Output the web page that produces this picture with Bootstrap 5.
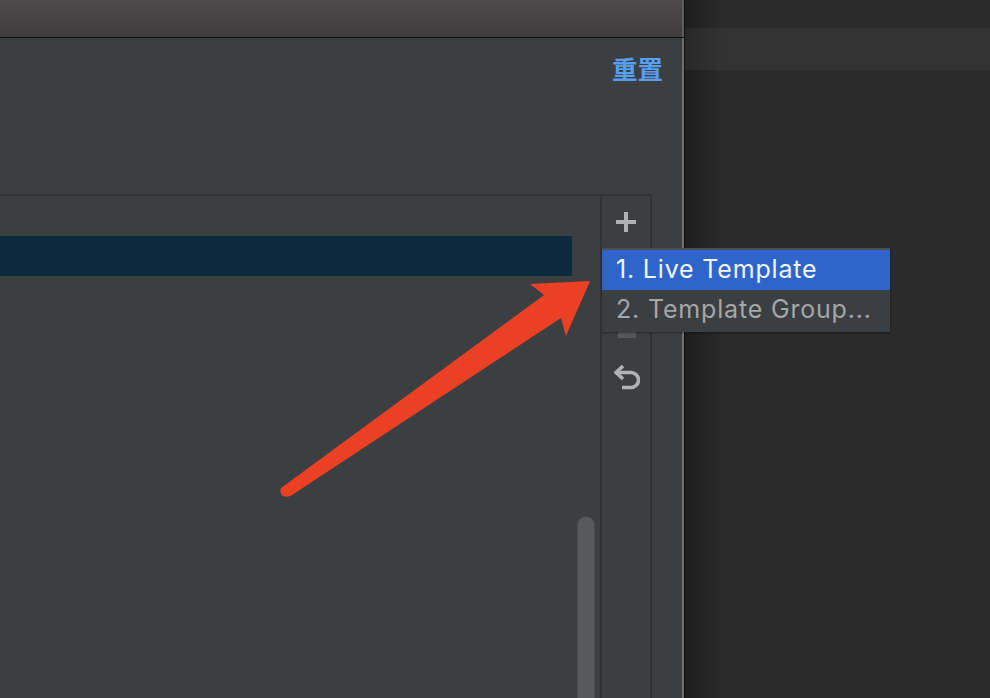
<!doctype html>
<html lang="zh">
<head>
<meta charset="utf-8">
<title>Live Templates</title>
<link href="https://cdn.jsdelivr.net/npm/bootstrap@5.3.0/dist/css/bootstrap.min.css" rel="stylesheet">
<style>
html,body{height:100%;margin:0;overflow:hidden;background:#2b2b2b}
.stage{width:990px;height:698px;position:relative;overflow:hidden}
.dlg{width:685px;height:698px;background:#3c3f41;border-right:1px solid #0f0f0f;box-shadow:inset -2px 0 0 #6f7172;flex:none}
.ttl{height:38px;background:linear-gradient(#4c4a4b,#3f3d3e);border-bottom:1px solid #0e0e0e;flex:none;box-shadow:inset -2px 0 0 #5f5d5e}
.hdr{height:156px;padding:15px 21px 0 0;flex:none;width:684px}
.rst{font:700 25.500px/30px "Noto Sans CJK SC","Liberation Sans",sans-serif;color:#589df6;text-decoration:none}
.pnl{width:652px;border:solid #313334;border-width:2px 2px 0 0;flex:1 1 auto;min-height:0}
.lst{width:572px;padding-top:40px;flex:none}
.sel{height:40px;background:#0d293e}
.trk{width:28px;flex:none;padding:321px 6px 0}
.thm{width:16px;height:200px;background:#58595a;border-radius:8px 8px 0 0;box-shadow:0 0 0 1px #484a4b}
.tools{width:48px;flex:none;border-left:2px solid #313334;padding-top:16px}
.ic-plus{width:20px;height:20px;margin-left:1px}
.ic-minus{width:18px;height:6px;margin-top:100px;margin-left:3px}
.ic-undo{width:26px;height:25px;margin-top:27px;margin-left:3px}
.bg-side{flex:1 1 auto;background:linear-gradient(90deg,#1e1e1e,#2b2b2b 40px);padding-top:28px}
.band{height:42px;background:linear-gradient(90deg,#282828,#333 40px)}
.pop{position:absolute;left:602px;top:248px;width:288px;height:84px;background:#3c3f41;border-top:2px solid #4d5052;box-shadow:0 1px 2px rgba(0,0,0,.4);font:400 25px/38px "Inter","Liberation Sans",sans-serif;letter-spacing:.82px}
.pop-it{height:40px;padding-left:14px;color:#a4a6a8;white-space:nowrap}
.pop-it.on{background:#2f65ca;color:#f2f5fb}
.arw{position:absolute;left:0;top:0;width:990px;height:698px;pointer-events:none}
</style>
</head>
<body>
<div class="stage d-flex">
  <div class="dlg d-flex flex-column">
    <div class="ttl"></div>
    <div class="hdr d-flex justify-content-end align-items-start"><a class="rst" href="#">重置</a></div>
    <div class="pnl d-flex">
      <div class="lst"><div class="sel"></div></div>
      <div class="trk"><div class="thm"></div></div>
      <div class="tools d-flex flex-column align-items-center">
        <svg class="ic-plus" viewBox="0 0 20 20"><path d="M8 0h4v8h8v4h-8v8H8v-8H0V8h8z" fill="#afb1b3"/></svg>
        <svg class="ic-minus" viewBox="0 0 18 6"><rect width="18" height="6" fill="#565859"/></svg>
        <svg class="ic-undo" viewBox="0 0 26 25"><path d="M9 1 2 7.500 9 14M3 7.500h14a6.500 6.500 0 0 1 0 15H8" fill="none" stroke="#afb1b3" stroke-width="3.600"/></svg>
      </div>
    </div>
  </div>
  <div class="bg-side"><div class="band"></div></div>
  <svg class="arw" viewBox="0 0 990 698"><path d="M590 281 530 284 544 295 281 488Q279 493 283 496 288 498 292 495L561 318 566 336Z" fill="#ec4025"/></svg>
  <div class="pop">
    <div class="pop-it on">1. Live Template</div>
    <div class="pop-it">2. Template Group...</div>
  </div>
</div>
<script src="https://cdn.jsdelivr.net/npm/bootstrap@5.3.0/dist/js/bootstrap.bundle.min.js"></script>
</body>
</html>
